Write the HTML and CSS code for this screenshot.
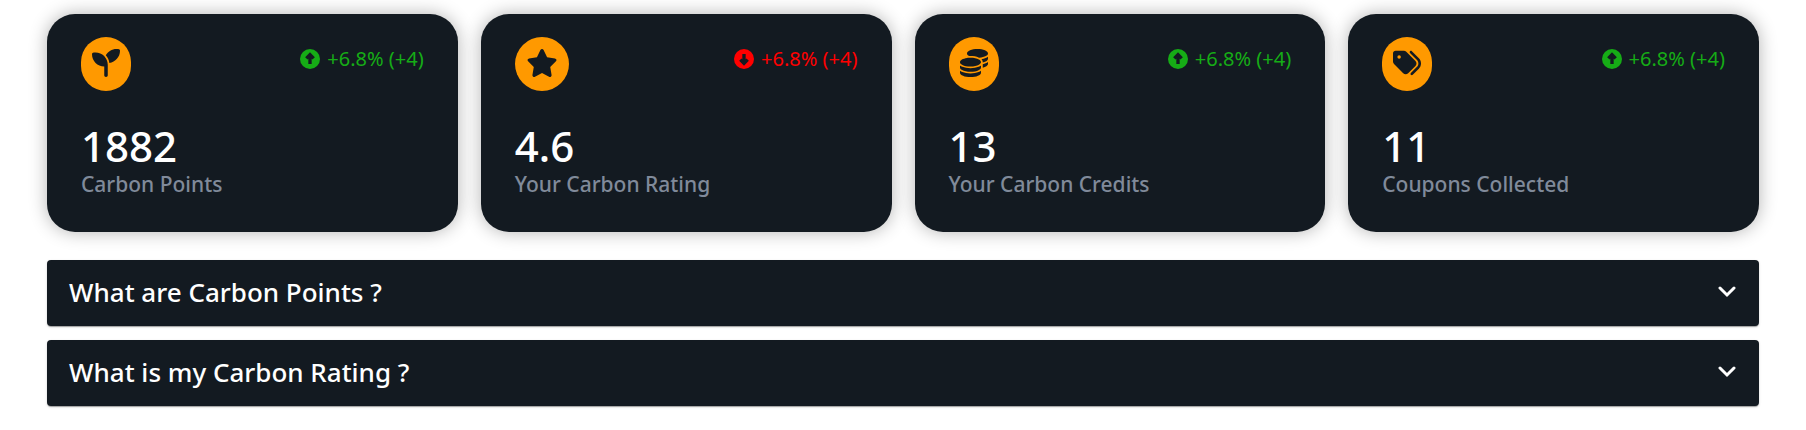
FILE: index.html
```html
<!DOCTYPE html>
<html lang="en">
<head>
<meta charset="utf-8">
<title>Carbon dashboard</title>
<link rel="stylesheet" href="styles.css">
</head>
<body>
<svg class="sprite" aria-hidden="true">
  <symbol id="up" viewBox="0 0 60 60">
    <circle cx="30" cy="30" r="30"/>
    <path class="arrow" d="M19 28 30 17 41 28M30 18V45"/>
  </symbol>
  <symbol id="down" viewBox="0 0 60 60">
    <circle cx="30" cy="30" r="30"/>
    <path class="arrow" d="M19 32 30 43 41 32M30 42V15"/>
  </symbol>
</svg>
<main class="page">
  <section class="cards">
    <article class="card">
      <div class="card-top">
        <span class="badge"><svg class="glyph" viewBox="0 0 512 512"><path d="M512 32c0 113.6-84.6 207.5-194.2 222c-7.1-53.4-30.6-101.6-65.3-139.3C290.8 46.3 364 0 448 0h32c17.7 0 32 14.3 32 32zM0 96C0 78.3 14.3 64 32 64H64c123.7 0 224 100.3 224 224v32V480c0 17.7-14.3 32-32 32s-32-14.3-32-32V320C100.3 320 0 219.7 0 96z"/></svg></span>
        <span class="trend"><svg class="trend-icon"><use href="#up"/></svg>+6.8% (+4)</span>
      </div>
      <div class="value">1882</div>
      <div class="label">Carbon Points</div>
    </article>
    <article class="card">
      <div class="card-top">
        <span class="badge"><svg class="glyph glyph-wide" viewBox="0 0 576 512"><path d="M316.9 18C311.6 7 300.4 0 288.1 0s-23.4 7-28.8 18L195 150.3 51.4 171.5c-12 1.8-22 10.2-25.7 21.7s-.7 24.2 7.9 32.7L137.8 329 113.2 474.7c-2 12 3 24.2 12.9 31.3s23 8 33.8 2.3l128.3-68.5 128.3 68.5c10.8 5.7 23.9 4.9 33.8-2.3s14.9-19.3 12.9-31.3L438.5 329 542.7 225.9c8.6-8.5 11.7-21.2 7.9-32.7s-13.7-19.9-25.7-21.7L381.2 150.3 316.9 18z"/></svg></span>
        <span class="trend trend-down"><svg class="trend-icon"><use href="#down"/></svg>+6.8% (+4)</span>
      </div>
      <div class="value">4.6</div>
      <div class="label">Your Carbon Rating</div>
    </article>
    <article class="card">
      <div class="card-top">
        <span class="badge"><svg class="glyph" viewBox="0 0 512 512"><path d="M512 80c0 18-14.3 34.6-38.4 48c-29.1 16.1-72.5 27.5-122.3 30.9c-3.7-1.8-7.4-3.5-11.3-5C300.6 137.4 248.2 128 192 128c-8.3 0-16.4 .2-24.5 .6l-1.1-.6C142.3 114.6 128 98 128 80c0-44.2 86-80 192-80S512 35.8 512 80zM160.7 161.1c10.2-.7 20.7-1.1 31.3-1.1c62.2 0 117.4 12.3 152.5 31.4C369.3 204.9 384 221.7 384 240c0 4-.7 7.9-2.1 11.7c-4.6 13.2-17 25.3-35 35.5c-.1 .1-.3 .1-.4 .2c-.3 .2-.6 .3-.9 .5c-35 19.4-90.8 32-153.6 32c-59.6 0-112.9-11.3-148.2-29.1c-1.9-.9-3.7-1.9-5.5-2.9C14.3 274.6 0 258 0 240c0-34.8 53.4-64.5 128-75.4c10.5-1.5 21.4-2.7 32.7-3.5zM416 240c0-21.9-10.6-39.9-24.1-53.4c28.3-4.4 54.2-11.4 76.2-20.5c16.3-6.8 31.5-15.2 43.9-25.5V176c0 19.3-16.5 37.1-43.8 50.9c-14.6 7.4-32.4 13.7-52.4 18.5c.1-1.8 .2-3.5 .2-5.3zm-32 96c0 18-14.3 34.6-38.4 48c-1.8 1-3.6 1.9-5.5 2.9C304.9 404.7 251.6 416 192 416c-62.8 0-118.6-12.6-153.6-32C14.3 370.6 0 354 0 336V300.6c12.5 10.3 27.6 18.7 43.9 25.5C83.4 342.6 135.8 352 192 352s108.6-9.4 148.1-25.9c7.8-3.2 15.3-6.9 22.4-10.9c6.1-3.4 11.8-7.2 17.2-11.2c1.5-1.1 2.9-2.3 4.3-3.4V304v5.7V336zm32 0V304 278.1c19-4.2 36.5-9.5 52.1-16c16.3-6.8 31.5-15.2 43.9-25.5V272c0 10.5-5 21-14.9 30.9c-16.3 16.3-45 29.7-81.3 38.4c.1-1.7 .2-3.5 .2-5.3zM192 448c56.2 0 108.6-9.4 148.1-25.9c16.3-6.8 31.5-15.2 43.9-25.5V432c0 44.2-86 80-192 80S0 476.2 0 432V396.6c12.5 10.3 27.6 18.7 43.9 25.5C83.4 438.6 135.8 448 192 448z"/></svg></span>
        <span class="trend"><svg class="trend-icon"><use href="#up"/></svg>+6.8% (+4)</span>
      </div>
      <div class="value">13</div>
      <div class="label">Your Carbon Credits</div>
    </article>
    <article class="card">
      <div class="card-top">
        <span class="badge"><svg class="glyph" viewBox="0 0 512 512"><path d="M345 39.1L472.8 168.4c52.4 53 52.4 138.2 0 191.2L360.8 472.9c-9.3 9.4-24.5 9.5-33.9 .2s-9.5-24.5-.2-33.9L438.6 325.9c33.9-34.3 33.9-89.4 0-123.7L310.9 72.9c-9.3-9.4-9.2-24.6 .2-33.9s24.6-9.2 33.9 .2zM0 229.5V80C0 53.5 21.5 32 48 32H197.5c17 0 33.3 6.7 45.3 18.7l168 168c25 25 25 65.5 0 90.5L277.3 442.7c-25 25-65.5 25-90.5 0l-168-168C6.7 262.7 0 246.5 0 229.5zM144 144a32 32 0 1 0 -64 0 32 32 0 1 0 64 0z"/></svg></span>
        <span class="trend"><svg class="trend-icon"><use href="#up"/></svg>+6.8% (+4)</span>
      </div>
      <div class="value">11</div>
      <div class="label">Coupons Collected</div>
    </article>
  </section>
  <section class="faq">
    <button class="question" type="button" aria-expanded="false">What are Carbon Points ?<svg class="chevron" viewBox="0 0 18 12"><path d="M2 2 9 9 16 2"/></svg></button>
    <button class="question" type="button" aria-expanded="false">What is my Carbon Rating ?<svg class="chevron" viewBox="0 0 18 12"><path d="M2 2 9 9 16 2"/></svg></button>
  </section>
</main>
</body>
</html>
```
FILE: styles.css
```css
* {
  box-sizing: border-box;
}

body {
  margin: 0;
  background: #fff;
  font-family: "Noto Sans", "Open Sans", sans-serif;
}

.sprite {
  display: none;
}

.page {
  padding: 14px 47px 24px;
}

.cards {
  display: grid;
  grid-template-columns: repeat(4, 1fr);
  gap: 23px;
}

.card {
  padding: 23px 34px 33px;
  border-radius: 28px;
  background: #131a21;
  box-shadow: 0 0 18px rgba(0, 0, 0, 0.3);
}

.card-top {
  display: flex;
  justify-content: space-between;
  align-items: flex-start;
}

.badge {
  padding: 12px 11px 14px;
  border-radius: 50px;
  background: #ff9900;
}

.glyph {
  display: block;
  width: 28px;
  height: 28px;
  fill: #131a21;
}

.glyph-wide {
  width: 32px;
}

.trend {
  display: flex;
  align-items: center;
  gap: 7px;
  padding-top: 9px;
  color: #16ac16;
  font-size: 20px;
  line-height: 26px;
}

.trend-down {
  color: #ff0000;
}

.trend-icon {
  width: 20px;
  height: 20px;
  fill: currentColor;
}

.arrow {
  fill: none;
  stroke: #131a21;
  stroke-width: 10;
}

.value {
  margin-top: 31px;
  color: #fff;
  font-size: 42px;
  font-weight: 500;
  line-height: 48px;
}

.label {
  color: #808a9a;
  font-size: 21px;
  font-weight: 500;
  line-height: 29px;
}

.faq {
  display: grid;
  gap: 14px;
  margin-top: 28px;
}

.question {
  display: flex;
  align-items: center;
  justify-content: space-between;
  padding: 15px 23px 17px 22px;
  border: 0;
  border-radius: 4px;
  background: #131a21;
  box-shadow: 0 2px 1px -1px rgba(0, 0, 0, 0.2), 0 1px 1px rgba(0, 0, 0, 0.14), 0 1px 3px rgba(0, 0, 0, 0.12);
  color: #fff;
  font-family: inherit;
  font-size: 26px;
  font-weight: 500;
  line-height: 34px;
  text-align: left;
}

.chevron {
  width: 18px;
  height: 12px;
  fill: none;
  stroke: #fff;
  stroke-width: 3;
  stroke-linecap: round;
}
```
